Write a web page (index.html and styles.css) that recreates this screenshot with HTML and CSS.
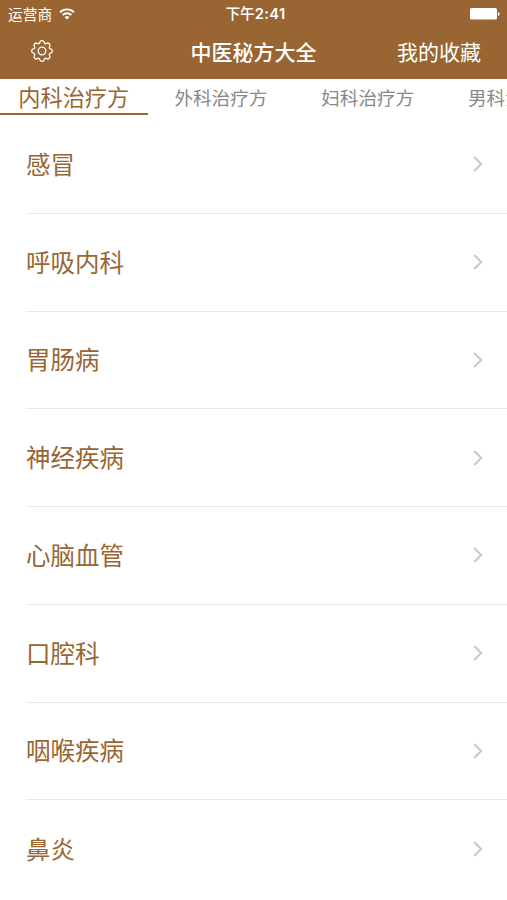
FILE: index.html
```html
<!DOCTYPE html>
<html lang="zh-CN">
<head>
<meta charset="utf-8">
<title>中医秘方大全</title>
<link rel="stylesheet" href="styles.css">
</head>
<body>
<header class="top">
  <div class="status">
    <div class="carrier"><span>运营商</span>
      <svg class="wifi" width="16" height="12" viewBox="0 0 16 12"><path d="M1 4.2a10 10 0 0 1 14 0M3.6 7a6.3 6.3 0 0 1 8.8 0" fill="none" stroke="#fff" stroke-width="1.9"/><path d="M5.6 9.2a3.4 3.4 0 0 1 4.8 0L8 11.6z" fill="#fff"/></svg>
    </div>
    <div class="time">下午<span class="digits">2:41</span></div>
    <div class="power"><svg width="31" height="12" viewBox="0 0 31 12"><rect width="27" height="11.6" rx="1.6" fill="#fff"/><path d="M28 4v4q1.7-.5 1.7-2t-1.7-2z" fill="#fff"/></svg></div>
  </div>
  <nav class="nav">
    <svg class="gear" width="24" height="24" viewBox="-12 -12 24 24"><path d="M-2.2-8.7A2.3 2.3 0 0 1 2.2-8.7Q2.6-6.4 4.6-7.7A2.3 2.3 0 0 1 7.7-4.6Q6.4-2.6 8.7-2.2A2.3 2.3 0 0 1 8.7 2.2Q6.4 2.6 7.7 4.6A2.3 2.3 0 0 1 4.6 7.7Q2.6 6.4 2.2 8.7A2.3 2.3 0 0 1-2.2 8.7Q-2.6 6.4-4.6 7.7A2.3 2.3 0 0 1-7.7 4.6Q-6.4 2.6-8.7 2.2A2.3 2.3 0 0 1-8.7-2.2Q-6.4-2.6-7.7-4.6A2.3 2.3 0 0 1-4.6-7.7Q-2.6-6.4-2.2-8.7z"/><circle r="3.8"/></svg>
    <h1 class="title">中医秘方大全</h1>
    <a class="fav">我的收藏</a>
  </nav>
</header>
<div class="tabs">
  <div class="tab active">内科治疗方</div><div class="tab">外科治疗方</div><div class="tab">妇科治疗方</div><div class="tab">男科治疗方</div>
</div>
<ul class="list">
  <li class="row"><span class="name">感冒</span><svg class="chev" viewBox="0 0 10 16"><path d="M1.2 1l7 7-7 7"/></svg></li>
  <li class="row"><span class="name">呼吸内科</span><svg class="chev" viewBox="0 0 10 16"><path d="M1.2 1l7 7-7 7"/></svg></li>
  <li class="row"><span class="name">胃肠病</span><svg class="chev" viewBox="0 0 10 16"><path d="M1.2 1l7 7-7 7"/></svg></li>
  <li class="row"><span class="name">神经疾病</span><svg class="chev" viewBox="0 0 10 16"><path d="M1.2 1l7 7-7 7"/></svg></li>
  <li class="row"><span class="name">心脑血管</span><svg class="chev" viewBox="0 0 10 16"><path d="M1.2 1l7 7-7 7"/></svg></li>
  <li class="row"><span class="name">口腔科</span><svg class="chev" viewBox="0 0 10 16"><path d="M1.2 1l7 7-7 7"/></svg></li>
  <li class="row"><span class="name">咽喉疾病</span><svg class="chev" viewBox="0 0 10 16"><path d="M1.2 1l7 7-7 7"/></svg></li>
  <li class="row"><span class="name">鼻炎</span><svg class="chev" viewBox="0 0 10 16"><path d="M1.2 1l7 7-7 7"/></svg></li>
</ul>
</body>
</html>
```
FILE: styles.css
```css
* { box-sizing: border-box; }
html, body { margin: 0; height: 900px; overflow: hidden; }
body { background: #fff; font-family: "Noto Sans CJK SC", sans-serif; color: #996633; }
.top { height: 79px; background: #996633; color: #fff; }
.status { height: 26px; display: grid; grid-template-columns: 1fr auto 1fr; align-items: center; padding: 0 6px 0 8px; font-size: 14.7px; line-height: 26px; }
.carrier { display: flex; align-items: center; gap: 7px; }
.time { font-size: 14.7px; font-weight: 500; padding-left: 2px; }
.digits { font-family: Inter, sans-serif; font-weight: 600; letter-spacing: .35px; }
.power { display: flex; justify-content: flex-end; }
.nav { height: 49px; display: grid; grid-template-columns: 1fr auto 1fr; align-items: center; padding: 0 26px 0 26px; }
.gear { margin-left: 3.5px; fill: none; stroke: #fff; stroke-width: 1.3; stroke-linejoin: round; }
.title { margin: 0; padding-top: 2px; font-size: 21px; font-weight: 500; line-height: 47px; }
.fav { justify-self: end; padding-top: 2px; font-size: 21px; line-height: 47px; }
.tabs { height: 37px; display: flex; overflow: hidden; color: #888; }
.tab { flex: 0 0 146.8px; height: 37px; font-size: 18.6px; line-height: 36px; text-align: center; }
.tab.active { flex-basis: 147.5px; height: 36px; font-size: 22.2px; line-height: 35px; color: #996633; border-bottom: 2px solid #996633; }
.list { list-style: none; margin: 0; padding: 0 0 0 26px; }
.row { height: 97.75px; display: flex; align-items: center; justify-content: space-between; padding-right: 24px; border-bottom: 1px solid #e8e8e8; font-size: 24.5px; }
.row:last-child { border-bottom: 0; }
.name { padding-bottom: 2px; }
.chev { width: 10px; height: 16px; fill: none; stroke: #c7c7cc; stroke-width: 2; }
```
